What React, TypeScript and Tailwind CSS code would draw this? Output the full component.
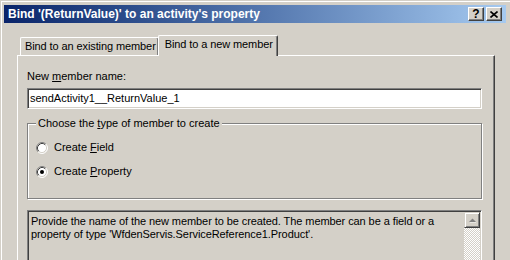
import React from 'react';

function Radio({ checked }: { checked?: boolean }) {
  return (
    <svg width="12" height="12" viewBox="0 0 12 12" className="shrink-0">
      <circle cx="6" cy="6" r="5" fill="#ffffff" />
      <path d="M2.11 9.89 A5.5 5.5 0 0 1 9.89 2.11" stroke="#808080" strokeWidth="1" fill="none" />
      <path d="M2.82 9.18 A4.5 4.5 0 0 1 9.18 2.82" stroke="#404040" strokeWidth="1" fill="none" />
      <path d="M9.89 2.11 A5.5 5.5 0 0 1 2.11 9.89" stroke="#ffffff" strokeWidth="1" fill="none" />
      <path d="M9.18 2.82 A4.5 4.5 0 0 1 2.82 9.18" stroke="#d4d0c8" strokeWidth="1" fill="none" />
      {checked && <circle cx="6" cy="6" r="2" fill="#000000" />}
    </svg>
  );
}

function TitleButton({ children }: { children: React.ReactNode }) {
  return (
    <div className="w-[16px] h-[14px] bg-[#d4d0c8] border border-t-white border-l-white border-b-[#404040] border-r-[#404040] shadow-[inset_-1px_-1px_0_#808080] flex items-center justify-center text-[12px] font-bold leading-none text-black">
      {children}
    </div>
  );
}

export default function App() {
  return (
    <div
      className="w-[510px] h-[260px] bg-[#d4d0c8] overflow-hidden text-black text-[11px] leading-[13px]"
      style={{ fontFamily: '"Liberation Sans", Arial, sans-serif' }}
    >
      <div className="h-full border-l border-t border-white ml-[1px] mt-[1px] pl-[2px] pt-[2px] pr-[4px]">
        {/* title bar */}
        <div className="h-[18px] mt-[1px] bg-gradient-to-r from-[#0a246a] to-[#a6caf0] flex items-center pl-[4px] pr-[4px]">
          <span className="text-white font-bold text-[12px] flex-1 whitespace-nowrap">
            Bind '(ReturnValue)' to an activity's property
          </span>
          <div className="flex gap-[2px]">
            <TitleButton>?</TitleButton>
            <TitleButton>
              <svg width="8" height="7" viewBox="0 0 8 7">
                <path d="M0.5 0.5 L7.5 6.5 M7.5 0.5 L0.5 6.5" stroke="#000" strokeWidth="1.6" />
              </svg>
            </TitleButton>
          </div>
        </div>

        <div className="pl-[13px] pt-[12px] pr-[11px]">
          {/* tabs */}
          <div className="flex items-end h-[20px] pl-[3px] tracking-[-0.1px]">
            <div className="h-[18px] pl-[4px] pr-[2px] pt-[2px] border-t border-l border-white border-r border-r-[#404040] rounded-tl-[2px] rounded-tr-[2px] shadow-[inset_-1px_0_0_#808080] whitespace-nowrap">
              Bind to an existing member
            </div>
            <div className="relative z-10 -mb-[1px] -ml-[1px] h-[21px] pl-[6px] pr-[4px] pt-[2px] bg-[#d4d0c8] border-t border-l border-white border-r border-r-[#404040] rounded-tl-[2px] rounded-tr-[2px] shadow-[inset_-1px_0_0_#808080] whitespace-nowrap">
              Bind to a new member
            </div>
          </div>

          {/* panel */}
          <div className="h-[260px] border-t border-l border-white border-r border-r-[#404040] shadow-[inset_-1px_0_0_#808080] pl-[9px] pr-[12px] pt-[14px]">
            <div className="h-[13px] whitespace-nowrap">
              New <span className="underline">m</span>ember name:
            </div>
            <div className="mt-[5px] h-[21px] bg-white border border-t-[#808080] border-l-[#808080] border-b-white border-r-white shadow-[inset_1px_1px_0_#404040,inset_-1px_-1px_0_#d4d0c8] flex items-center pl-[2px]">
              sendActivity1__ReturnValue_1
            </div>

            {/* group box */}
            <div className="relative mt-[14px] h-[76px] border border-[#808080] shadow-[1px_1px_0_#ffffff,inset_1px_1px_0_#ffffff] pl-[8px] pt-[17px]">
              <div className="absolute -top-[7px] left-[8px] bg-[#d4d0c8] px-[2px] whitespace-nowrap">
                Choose the <span className="underline">t</span>ype of member to create
              </div>
              <div className="flex items-center gap-[6px] h-[13px]">
                <Radio />
                <span>
                  Create <span className="underline">F</span>ield
                </span>
              </div>
              <div className="flex items-center gap-[6px] h-[13px] mt-[11px]">
                <Radio checked />
                <span>
                  Create <span className="underline">P</span>roperty
                </span>
              </div>
            </div>

            {/* description */}
            <div className="mt-[11px] h-[70px] flex border border-t-[#808080] border-l-[#808080] border-b-white border-r-white shadow-[inset_1px_1px_0_#404040,inset_-1px_-1px_0_#d4d0c8] p-[1px]">
              <div className="flex-1 pl-[2px] pt-[3px] tracking-[-0.08px]">
                Provide the name of the new member to be created. The member can be a field or a property of type
                'WfdenServis.ServiceReference1.Product'.
              </div>
              <div className="w-[16px] flex flex-col">
                <div className="h-[16px] bg-[#d4d0c8] border border-t-[#d4d0c8] border-l-[#d4d0c8] border-b-[#404040] border-r-[#404040] shadow-[inset_1px_1px_0_#ffffff,inset_-1px_-1px_0_#808080] flex items-center justify-center">
                  <svg width="7" height="5" viewBox="0 0 7 5">
                    <path d="M3.5 0.5 L7 4 L0 4 Z" fill="#808080" />
                    <path d="M1 5 L7 5" stroke="#ffffff" strokeWidth="1" />
                  </svg>
                </div>
                <div className="flex-1 bg-[repeating-conic-gradient(#d4d0c8_0_25%,#ffffff_0_50%)] bg-[length:2px_2px]" />
              </div>
            </div>
          </div>
        </div>
      </div>
    </div>
  );
}
